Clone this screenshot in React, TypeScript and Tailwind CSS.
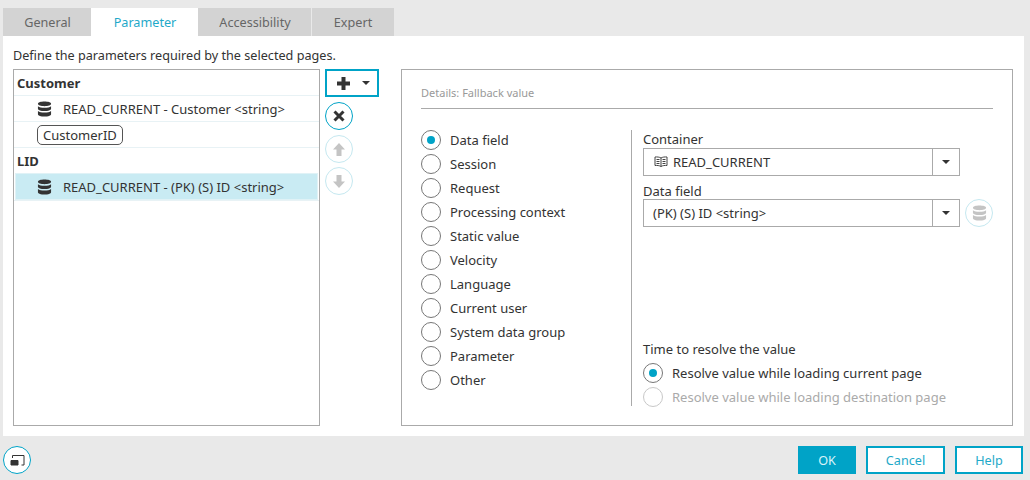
import { ReactNode } from "react"

const tabs = ["General", "Parameter", "Accessibility", "Expert"]
const sources = ["Data field", "Session", "Request", "Processing context", "Static value", "Velocity", "Language", "Current user", "System data group", "Parameter", "Other"]

const DbIcon = ({ color = "#333" }: { color?: string }) => (
    <svg width="15" height="16" viewBox="0 0 16 16" preserveAspectRatio="none" fill={color}>
        <path d="M1 2.800C1 1.300 4.200.5 8 .5s7 .8 7 2.300S11.800 5.200 8 5.200 1 4.300 1 2.800Z" />
        <path d="M1 5.300C2.300 6.400 5 6.800 8 6.800s5.700-.4 7-1.500v2.400c0 1.400-3.200 2.300-7 2.300s-7-.9-7-2.300Z" />
        <path d="M1 10C2.300 11.100 5 11.500 8 11.500s5.700-.4 7-1.500v3.200c0 1.400-3.200 2.300-7 2.300s-7-.9-7-2.300Z" />
    </svg>
)

const BookIcon = () => (
    <svg width="14" height="12" viewBox="0 0 14 12" fill="none" stroke="#444" strokeWidth="1">
        <path d="M7 2C5.500 1 3 .8 1 1v8.500c2-.2 4.500 0 6 1 1.500-1 4-1.200 6-1V1c-2-.2-4.500 0-6 1Zm0 0v8.500" />
        <path d="M2.500 3.500h3M2.500 5.500h3M2.500 7.500h3M8.500 3.500h3M8.500 5.500h3M8.500 7.500h3" />
    </svg>
)

const Caret = () => <span className="h-0 w-0 border-x-[4px] border-t-[4px] border-x-transparent border-t-[#333]" />

const CircleButton = ({ disabled, children }: { disabled?: boolean; children: ReactNode }) => (
    <div className={`flex h-7 w-7 items-center justify-center rounded-full border bg-white ${disabled ? "border-[#c5e8f0]" : "border-[#00a3c7]"}`}>
        {children}
    </div>
)

const Radio = ({ checked, disabled, label }: { checked?: boolean; disabled?: boolean; label: string }) => (
    <div className="flex h-6 items-center">
        <span className={`flex h-5 w-5 shrink-0 items-center justify-center rounded-full border ${disabled ? "border-[#c8c8c8]" : "border-[#777]"}`}>
            {checked && <span className="h-2 w-2 rounded-full bg-[#00a3c7]" />}
        </span>
        <span className={`ml-[9px] ${disabled ? "text-[#aaa]" : "text-[#333]"}`}>{label}</span>
    </div>
)

const Select = ({ children }: { children: ReactNode }) => (
    <div className="flex h-7 w-[317px] items-center border border-[#aaa] bg-white">
        <div className="flex flex-1 items-center gap-[5px] pl-[9px] text-[#333]">{children}</div>
        <div className="flex h-full w-[27px] items-center justify-center border-l border-[#aaa]"><Caret /></div>
    </div>
)

const App = () => {
    return (
        <div className="flex h-[480px] w-[1030px] flex-col overflow-hidden bg-[#e9e9e9] pt-2 text-[13px] leading-[18px] text-[#333] font-['Noto_Sans',sans-serif]">
            {/* tabs */}
            <div className="ml-[3px] flex h-7 text-[12.65px]">
                {tabs.map((tab) => {
                    const active = tab === "Parameter"
                    const width = tab === "General" ? "w-[88px] pl-px" : tab === "Parameter" ? "w-[107px] pl-px" : tab === "Accessibility" ? "w-[113px] mr-px pl-px" : "w-[82px]"
                    return (
                        <div key={tab} className={`flex items-center justify-center ${width} ${active ? "bg-white text-[#1fa9c9]" : "bg-[#d3d3d3] text-[#666]"}`}>
                            {tab}
                        </div>
                    )
                })}
            </div>

            <div className="ml-[3px] flex h-[400px] w-[1021px] flex-col bg-white px-2.5 pt-2.5">
                <div className="h-[23px] text-[12.65px]">Define the parameters required by the selected pages.</div>
                <div className="flex">
                    {/* parameter list */}
                    <div className="h-[357px] w-[307px] border border-[#aaa]">
                        <div className="flex h-[26px] items-center border-b border-[#e8f2f5] pl-[3px] font-bold">Customer</div>
                        <div className="flex h-[26px] items-center border-b border-[#e8f2f5] pl-[23px]">
                            <DbIcon />
                            <span className="ml-[11px]">READ_CURRENT - Customer &lt;string&gt;</span>
                        </div>
                        <div className="flex h-[26px] items-center border-b border-[#e8f2f5] pl-[23px]">
                            <span className="flex h-5 items-center rounded-[5px] border border-[#555] px-[5px]">CustomerID</span>
                        </div>
                        <div className="flex h-[25px] items-center pl-[3px] font-bold">LID</div>
                        <div className="border-b border-[#e8f2f5] px-px">
                            <div className="flex h-[27px] items-center border border-[#e0f2f6] bg-[#c9ebf3] pl-[21px]">
                                <DbIcon />
                                <span className="ml-[11px]">READ_CURRENT - (PK) (S) ID &lt;string&gt;</span>
                            </div>
                        </div>
                    </div>

                    {/* list actions */}
                    <div className="ml-[5px] flex w-[54px] flex-col items-start">
                        <div className="flex h-7 w-[54px] items-center border-2 border-[#00a3c7] pl-[10px]">
                            <svg width="13" height="13" viewBox="0 0 13 13" fill="#333"><path d="M4.500 0h4v4.500H13v4H8.500V13h-4V8.500H0v-4h4.500Z" /></svg>
                            <span className="ml-[12px] flex"><Caret /></span>
                        </div>
                        <div className="mt-[5px] flex flex-col">
                            <CircleButton>
                                <svg width="12" height="12" viewBox="0 0 12 12" stroke="#333" strokeWidth="3"><path d="M1.500 1.500l9 9M10.500 1.500l-9 9" /></svg>
                            </CircleButton>
                            <div className="mt-[5px]">
                                <CircleButton disabled>
                                    <svg width="12" height="13" viewBox="0 0 12 13" fill="#c4c4c4"><path d="M6 0l6 6.500H8.500V13h-5V6.500H0Z" /></svg>
                                </CircleButton>
                            </div>
                            <div className="mt-1">
                                <CircleButton disabled>
                                    <svg width="12" height="13" viewBox="0 0 12 13" fill="#c4c4c4"><path d="M6 13L0 6.500h3.500V0h5v6.500H12Z" /></svg>
                                </CircleButton>
                            </div>
                        </div>
                    </div>

                    {/* details */}
                    <div className="ml-[22px] flex h-[357px] w-[612px] flex-col border border-[#aaa] px-[19px]">
                        <div className="flex h-[39px] items-end border-b border-[#aaa] pb-[8px] text-[11px] leading-[15px] text-[#999]">Details: Fallback value</div>
                        <div className="mt-[21px] flex h-[276px]">
                            <div className="-mt-[2px] w-[210px]">
                                {sources.map((source, i) => (
                                    <Radio key={source} label={source} checked={i === 0} />
                                ))}
                            </div>
                            <div className="flex w-[362px] flex-col border-l border-[#aaa] pl-[11px]">
                                <div className="h-[18px]">Container</div>
                                <Select>
                                    <span className="ml-px flex"><BookIcon /></span>
                                    <span>READ_CURRENT</span>
                                </Select>
                                <div className="mt-[5px] h-[18px] leading-[20px]">Data field</div>
                                <div className="flex items-center gap-[5px]">
                                    <Select>(PK) (S) ID &lt;string&gt;</Select>
                                    <CircleButton disabled>
                                        <DbIcon color="#c4c4c4" />
                                    </CircleButton>
                                </div>
                                <div className="mt-auto h-[18px]">Time to resolve the value</div>
                                <div className="mt-[3px] -mb-[3px]">
                                    <Radio label="Resolve value while loading current page" checked />
                                    <Radio label="Resolve value while loading destination page" disabled />
                                </div>
                            </div>
                        </div>
                    </div>
                </div>
            </div>

            {/* footer */}
            <div className="ml-[3px] mt-2.5 flex w-[1020px] items-center text-[12.65px]">
                <CircleButton>
                    <svg width="15" height="11" viewBox="0 0 15 11" fill="none" stroke="#333">
                        <path d="M2.500 3V.5h11.500v9.500h-2.500" />
                        <path d="M1 5.500h7v4.500H1Z" fill="#333" />
                    </svg>
                </CircleButton>
                <div className="ml-auto flex gap-2.5">
                    <div className="flex h-7 w-[58px] items-center justify-center bg-[#00a3c7] text-[#d9f3f9]">OK</div>
                    <div className="flex h-7 w-[79px] items-center justify-center border-2 border-[#00a3c7] bg-white text-[#1fa9c9]">Cancel</div>
                    <div className="flex h-7 w-[68px] items-center justify-center border-2 border-[#00a3c7] bg-white text-[#1fa9c9]">Help</div>
                </div>
            </div>
        </div>
    )
}

export default App
